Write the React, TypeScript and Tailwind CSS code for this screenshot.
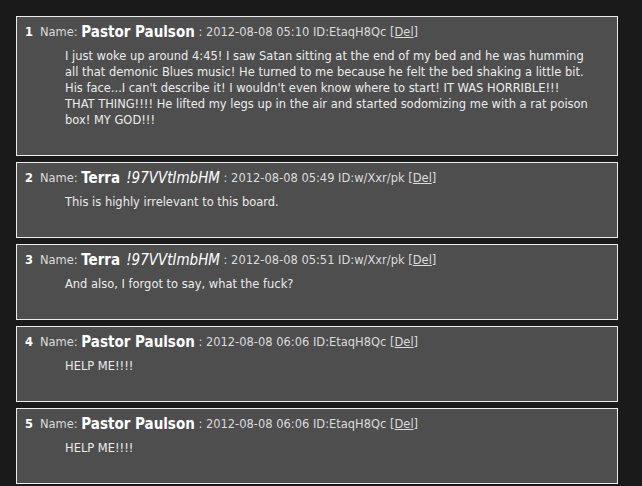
const POSTS = [
  {
    num: 1,
    name: "Pastor Paulson",
    trip: "",
    date: "2012-08-08 05:10",
    id: "EtaqH8Qc",
    lines: [
      "I just woke up around 4:45! I saw Satan sitting at the end of my bed and he was humming",
      "all that demonic Blues music! He turned to me because he felt the bed shaking a little bit.",
      "His face...I can't describe it! I wouldn't even know where to start! IT WAS HORRIBLE!!!",
      "THAT THING!!!! He lifted my legs up in the air and started sodomizing me with a rat poison",
      "box! MY GOD!!!",
    ],
  },
  {
    num: 2,
    name: "Terra",
    trip: "!97VVtImbHM",
    date: "2012-08-08 05:49",
    id: "w/Xxr/pk",
    lines: ["This is highly irrelevant to this board."],
  },
  {
    num: 3,
    name: "Terra",
    trip: "!97VVtImbHM",
    date: "2012-08-08 05:51",
    id: "w/Xxr/pk",
    lines: ["And also, I forgot to say, what the fuck?"],
  },
  {
    num: 4,
    name: "Pastor Paulson",
    trip: "",
    date: "2012-08-08 06:06",
    id: "EtaqH8Qc",
    lines: ["HELP ME!!!!"],
  },
  {
    num: 5,
    name: "Pastor Paulson",
    trip: "",
    date: "2012-08-08 06:06",
    id: "EtaqH8Qc",
    lines: ["HELP ME!!!!"],
  },
];

type Post = (typeof POSTS)[number];

function PostBox({ post }: { post: Post }) {
  return (
    <div className="border border-[#ececec] bg-[#4e4e4e] pt-[5px] pb-[27px] pl-2">
      <div className="flex h-5 items-center whitespace-nowrap text-[12.75px] text-[#dcdcdc]">
        <span className="mr-[7px] font-bold text-white">{post.num}</span>
        <span>Name:&nbsp;</span>
        <span className="text-[15px] font-bold text-white">{post.name}</span>
        {post.trip ? (
          <span className="ml-[6px] text-[15px] italic text-white">{post.trip}</span>
        ) : null}
        <span>&nbsp;: {post.date} ID:{post.id} [</span>
        <span className="underline">Del</span>
        <span>]</span>
      </div>
      <div className="mt-[6px] ml-10 text-[12.75px] leading-4 text-[#ececec]">
        {post.lines.map((line) => (
          <p key={line}>{line}</p>
        ))}
      </div>
    </div>
  );
}

export default function App() {
  return (
    <div
      className="min-h-[486px] bg-[#1a1a1a] pt-4 pl-4"
      style={{ fontFamily: '"DejaVu Sans Condensed", "DejaVu Sans", sans-serif' }}
    >
      <div className="flex w-[602px] flex-col gap-[6px]">
        {POSTS.map((post) => (
          <PostBox key={post.num} post={post} />
        ))}
      </div>
    </div>
  );
}
